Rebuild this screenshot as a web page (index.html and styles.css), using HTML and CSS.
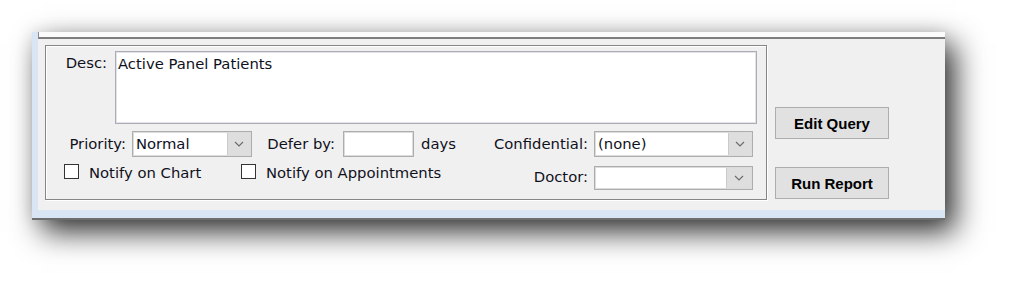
FILE: index.html
```html
<!DOCTYPE html>
<html lang="en">
<head>
    <meta charset="UTF-8">
    <title>Report Query</title>
    <link rel="stylesheet" href="styles.css">
</head>
<body>
    <div class="window">
        <div class="top-strip"></div>
        <div class="content">
            <div class="frame">
                <div class="row desc-row">
                    <span class="lbl desc-lbl">Desc:</span>
                    <div class="textarea">Active Panel Patients</div>
                </div>
                <div class="row fields-row">
                    <span class="lbl priority-lbl">Priority:</span>
                    <div class="select priority">
                        <span class="value">Normal</span>
                        <span class="drop"><svg width="10" height="6" viewBox="0 0 10 6"><path d="M1 1 L5 5 L9 1" fill="none" stroke="#6a6a6a" stroke-width="1.1"/></svg></span>
                    </div>
                    <span class="lbl defer-lbl">Defer by:</span>
                    <div class="input defer"></div>
                    <span class="lbl days-lbl">days</span>
                    <span class="lbl conf-lbl">Confidential:</span>
                    <div class="select conf">
                        <span class="value">(none)</span>
                        <span class="drop"><svg width="10" height="6" viewBox="0 0 10 6"><path d="M1 1 L5 5 L9 1" fill="none" stroke="#6a6a6a" stroke-width="1.1"/></svg></span>
                    </div>
                </div>
                <div class="row checks-row">
                    <div class="check chart"><span class="box"></span>Notify on Chart</div>
                    <div class="check appt"><span class="box"></span>Notify on Appointments</div>
                    <span class="lbl doctor-lbl">Doctor:</span>
                    <div class="select doctor">
                        <span class="value"></span>
                        <span class="drop"><svg width="10" height="6" viewBox="0 0 10 6"><path d="M1 1 L5 5 L9 1" fill="none" stroke="#6a6a6a" stroke-width="1.1"/></svg></span>
                    </div>
                </div>
            </div>
            <div class="buttons">
                <button class="btn">Edit Query</button>
                <button class="btn">Run Report</button>
            </div>
        </div>
    </div>
</body>
</html>
```

FILE: styles.css
```css
body {
    margin: 0;
    min-height: 288px;
    background: #fff;
    font-family: 'DejaVu Sans', sans-serif;
    font-size: 14.8px;
    color: #10101c;
    overflow: hidden;
}
.window {
    box-sizing: border-box;
    margin: 32px 0 0 32px;
    width: 913px;
    height: 188px;
    display: flex;
    flex-direction: column;
    background: #d9e5f2;
    padding: 0 0 8px 6px;
    border-bottom: 2px solid #6e6e6e;
    box-shadow: 10px 12px 28px 0 rgba(0, 0, 0, 0.8), 0 0 16px rgba(0, 0, 0, 0.1);
}
.top-strip {
    box-sizing: border-box;
    height: 7px;
    background: #fbfbfb;
    border-left: 1px solid #8c8c8c;
    border-bottom: 2px solid #7e7e7e;
}
.content {
    flex: 1;
    display: flex;
    align-items: flex-start;
    background: #f0f0f0;
    padding: 6px 0 0 7px;
}
.frame {
    box-sizing: border-box;
    width: 722px;
    height: 155px;
    border: 1px solid #858585;
    box-shadow: inset 1px 1px 0 #fff, 1px 1px 0 #fff;
    padding: 5px 9px 0 0;
}
.row {
    display: flex;
}
.lbl {
    line-height: 18px;
    white-space: nowrap;
}
.desc-lbl {
    width: 61px;
    text-align: right;
    margin-right: 8px;
    padding-top: 3px;
}
.textarea {
    box-sizing: border-box;
    flex: 1;
    height: 73px;
    background: #fff;
    border: 1px solid #abadb3;
    box-shadow: inset 0 0 0 1px #e2e3ea;
    padding: 3px 2px;
    line-height: 18px;
}
.fields-row {
    margin-top: 7px;
    height: 26px;
    align-items: center;
}
.priority-lbl {
    width: 80px;
    text-align: right;
    margin-right: 6px;
}
.select, .input {
    box-sizing: border-box;
    display: flex;
    background: #fff;
    border: 1px solid #adadad;
    box-shadow: inset 0 0 0 1px #dcdcdc;
    height: 26px;
}
.select .value {
    flex: 1;
    padding-left: 3px;
    line-height: 23px;
}
.select .drop {
    width: 22px;
    margin: 1px 1px 1px 0;
    background: #dedede;
    border-left: 1px solid #cacaca;
    display: flex;
    align-items: center;
    justify-content: center;
}
.priority {
    width: 120px;
}
.defer-lbl {
    width: 83px;
    text-align: right;
    margin-right: 8px;
}
.defer {
    width: 71px;
}
.days-lbl {
    width: 40px;
    margin-left: 7px;
}
.conf-lbl {
    width: 127px;
    text-align: right;
    margin-right: 6px;
}
.conf {
    width: 159px;
}
.checks-row {
    margin-top: 7px;
    height: 26px;
}
.check {
    display: flex;
    align-self: flex-start;
    line-height: 18px;
    white-space: nowrap;
}
.check .box {
    box-sizing: border-box;
    width: 15px;
    height: 15px;
    border: 1px solid #333;
    background: #fff;
    margin-right: 10px;
}
.chart {
    width: 177px;
    margin-left: 18px;
}
.appt {
    width: 220px;
}
.doctor-lbl {
    width: 127px;
    text-align: right;
    margin-right: 6px;
    align-self: center;
}
.doctor {
    width: 159px;
    height: 24px;
    align-self: flex-end;
}
.doctor .drop {
    width: 24px;
}
.buttons {
    display: flex;
    flex-direction: column;
    gap: 28px;
    margin-left: 8px;
    padding-top: 62px;
}
.btn {
    width: 114px;
    height: 32px;
    padding: 0;
    background: #e1e1e1;
    border: 1px solid #adadad;
    font-family: 'Liberation Sans', Arial, sans-serif;
    font-weight: bold;
    font-size: 15px;
    color: #000;
}
```
